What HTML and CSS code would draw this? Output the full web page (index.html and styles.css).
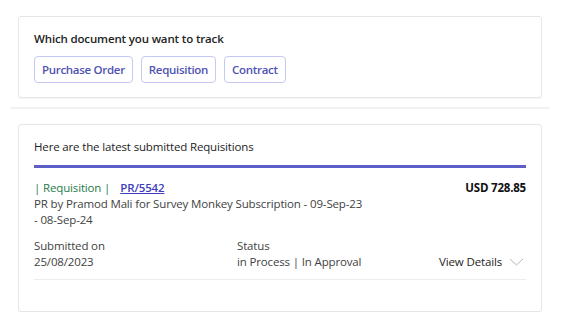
FILE: index.html
```html
<!DOCTYPE html>
<html lang="en">
<head>
<meta charset="utf-8">
<title>Track documents</title>
<link rel="stylesheet" href="styles.css">
</head>
<body>
<div class="page">
  <section class="card card-select">
    <p class="prompt">Which document you want to track</p>
    <div class="choices">
      <button class="choice">Purchase Order</button>
      <button class="choice">Requisition</button>
      <button class="choice">Contract</button>
    </div>
  </section>
  <div class="separator"></div>
  <section class="card card-list">
    <p class="list-title">Here are the latest submitted Requisitions</p>
    <div class="accent"></div>
    <div class="item">
      <div class="item-head">
        <div class="item-main">
          <div class="item-type"><span class="type">| Requisition |</span><a class="doc-link" href="#">PR/5542</a></div>
          <div class="item-desc">PR by Pramod Mali for Survey Monkey Subscription - <span class="nw">09-Sep-23</span> <span class="nw">- 08-Sep-24</span></div>
        </div>
        <div class="amount">USD 728.85</div>
      </div>
      <div class="item-meta">
        <div class="meta submitted">
          <div>Submitted on</div>
          <div>25/08/2023</div>
        </div>
        <div class="meta status">
          <div>Status</div>
          <div>in Process | In Approval</div>
        </div>
        <div class="details">
          <span>View Details</span>
          <svg class="chev" width="15" height="8" viewBox="0 0 15 8"><path d="M1 1 L7.5 7 L14 1" fill="none" stroke="#b8b8b8" stroke-width="1"/></svg>
        </div>
      </div>
    </div>
  </section>
</div>
</body>
</html>
```

FILE: styles.css
```css
* { box-sizing: border-box; }
html, body { margin: 0; padding: 0; background: #fff; }
body {
  font-family: "Open Sans", "Noto Sans", sans-serif;
  font-size: 11.5px;
  letter-spacing: -0.15px;
  color: #242424;
}
.page {
  width: 540px;
  margin-left: 10px;
  padding-top: 16px;
}
.card {
  margin: 0 8px;
  border: 1px solid #e6e6e6;
  border-radius: 3px;
  background: #fff;
  box-shadow: 0 1px 1px rgba(0,0,0,0.04);
}
.card-select {
  height: 82px;
  padding: 14px 15px 0;
}
.prompt {
  margin: 0;
  line-height: 16px;
  font-weight: 600;
  letter-spacing: -0.15px;
  color: #242424;
}
.choices {
  display: flex;
  gap: 8px;
  margin-top: 9px;
}
.choice {
  font: inherit;
  font-weight: 600;
  letter-spacing: -0.3px;
  color: #4f52b2;
  background: #fff;
  border: 1px solid #c5c7f5;
  border-radius: 4px;
  height: 27px;
  padding: 0 7px;
  cursor: pointer;
}
.separator {
  height: 2px;
  background: #f2f2f2;
  margin-top: 9px;
  margin-bottom: 15px;
}
.card-list {
  height: 188px;
  padding: 14px 15px 0;
}
.list-title {
  margin: 0;
  line-height: 16px;
  color: #242424;
}
.accent {
  height: 3px;
  background: #5b5fc7;
  margin-top: 10px;
}
.item {
  padding-top: 12px;
  border-bottom: 1px solid #ececec;
  padding-bottom: 9px;
}
.item-head {
  display: flex;
  justify-content: space-between;
  align-items: flex-start;
}
.item-main { width: 340px; line-height: 16px; }
.nw { white-space: nowrap; }
.type { color: #237b4b; margin-right: 10px; }
.doc-link {
  color: #3d3dbd;
  font-weight: 600;
  text-decoration: underline;
}
.item-desc { color: #424242; }
.amount { font-weight: 700; line-height: 16px; color: #111; letter-spacing: -0.2px; }
.item-meta {
  display: flex;
  align-items: flex-end;
  margin-top: 10px;
  line-height: 16px;
  color: #424242;
}
.submitted { width: 203px; }
.status { flex: 1; }
.details {
  display: flex;
  align-items: center;
  gap: 7px;
  color: #242424;
  padding-right: 2px;
}
.chev { display: block; }
```
